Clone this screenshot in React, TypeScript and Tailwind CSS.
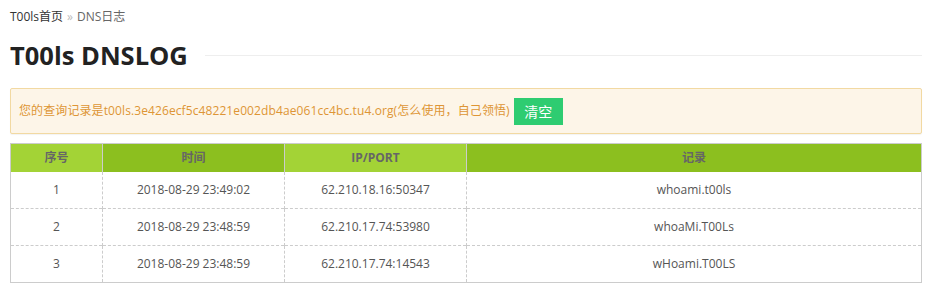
const rows = [
  { id: 1, time: '2018-08-29 23:49:02', ip: '62.210.18.16:50347', rec: 'whoami.t00ls' },
  { id: 2, time: '2018-08-29 23:48:59', ip: '62.210.17.74:53980', rec: 'whoaMi.T00Ls' },
  { id: 3, time: '2018-08-29 23:48:59', ip: '62.210.17.74:14543', rec: 'wHoami.T00LS' },
];

const App = () => {
  return (
    <div
      className="w-[937px] h-[303px] bg-white pl-[10px] pr-[15px]"
      style={{ fontFamily: '"Open Sans", "Noto Sans CJK SC", sans-serif' }}
    >
      {/* Breadcrumb */}
      <div className="h-[35px] pt-[9px] text-[12px] leading-[16px] text-[#333]">
        <a href="#" className="text-[#333]">T00ls首页</a>
        <span className="text-[#bbb] mx-[4px]">»</span>
        <span className="text-[#666]">DNS日志</span>
      </div>

      {/* Title */}
      <div className="flex items-center h-[40px]">
        <h1 className="text-[25.5px] leading-[40px] font-bold text-[#222]">T00ls DNSLOG</h1>
        <div className="flex-1 h-px bg-[#eee] ml-[17px]" />
      </div>

      {/* Notice */}
      <div className="mt-[13px] h-[46px] flex items-center px-[8px] border border-[#f2d9a2] bg-[#fdf5e8] rounded-[2px] shadow-[0_1px_1px_rgba(0,0,0,0.05)]">
        <span className="text-[12px] text-[#de9535] tracking-[0.1px]">
          您的查询记录是t00ls.3e426ecf5c48221e002db4ae061cc4bc.tu4.org(怎么使用，自己领悟)
        </span>
        <button className="ml-[4px] w-[49px] h-[27px] bg-[#2ecc71] text-white text-[14px] leading-[27px]">
          清空
        </button>
      </div>

      {/* Table */}
      <table className="mt-[9px] w-full border-collapse border border-[#ccc] text-[12px] text-center">
        <thead>
          <tr className="h-[28px] text-[#666] font-bold">
            <th className="w-[92px] bg-[#a3d336] border-r border-[#ccc]">序号</th>
            <th className="w-[182px] bg-[#8cbf1f] border-r border-[#ccc]">时间</th>
            <th className="w-[182px] bg-[#a3d336] border-r border-[#ccc]">IP/PORT</th>
            <th className="bg-[#8cbf1f]">记录</th>
          </tr>
        </thead>
        <tbody className="text-[#555]">
          {rows.map((r, i) => (
            <tr key={r.id} className={`h-[37px] ${i > 0 ? 'border-t border-dashed border-[#ccc]' : ''}`}>
              <td className="border-r border-dashed border-[#ccc]">{r.id}</td>
              <td className="border-r border-dashed border-[#ccc]">{r.time}</td>
              <td className="border-r border-dashed border-[#ccc]">{r.ip}</td>
              <td>{r.rec}</td>
            </tr>
          ))}
        </tbody>
      </table>
    </div>
  );
};

export default App;
